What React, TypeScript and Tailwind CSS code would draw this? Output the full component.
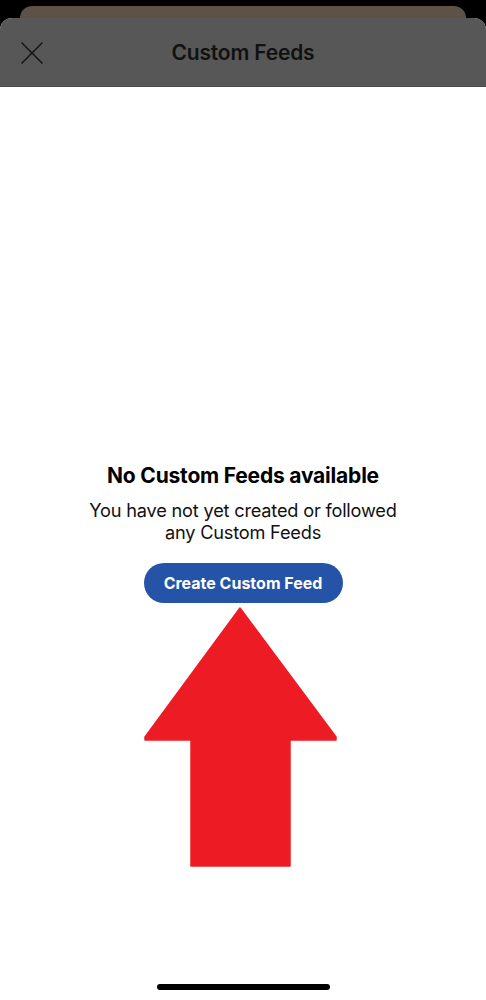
import React from "react";

export default function App() {
  return (
    <div
      className="w-[486px] h-[1000px] bg-black flex flex-col overflow-hidden"
      style={{ fontFamily: "Inter, 'Noto Sans', 'Liberation Sans', sans-serif" }}
    >
      <div className="h-[6px] shrink-0" />
      <div className="mx-[20px] h-[12px] shrink-0 rounded-t-[12px] bg-[#5e5246]" />
      <div className="flex-1 flex flex-col bg-white rounded-t-[12px] overflow-hidden">
        <div className="h-[69px] shrink-0 bg-[#575757] border-b border-[#4a4a4a] flex items-center relative">
          <div className="absolute left-[20px] top-[23px]">
            <svg width="24" height="24" viewBox="0 0 24 24">
              <path d="M2 2 L22 22 M22 2 L2 22" stroke="#161616" strokeWidth="1.6" fill="none" strokeLinecap="round" />
            </svg>
          </div>
          <div className="w-full text-center text-[21px] font-semibold text-[#111111] tracking-[-0.2px] pt-[2px]">
            Custom Feeds
          </div>
        </div>
        <div className="flex flex-col items-center pt-[375px]">
          <div className="text-[21px] leading-[28px] font-bold text-black tracking-[-0.2px]">
            No Custom Feeds available
          </div>
          <div className="mt-[9px] text-[18.2px] leading-[22px] text-[#111111] text-center tracking-[-0.2px]">
            You have not yet created or followed
            <br />
            any Custom Feeds
          </div>
          <button className="mt-[20px] h-[40px] w-[199px] rounded-full bg-[#2453a8] text-white text-[16px] font-bold tracking-[0px]">
            Create Custom Feed
          </button>
        </div>
        <svg width="486" height="262" viewBox="0 606 486 262" className="mt-[2px] shrink-0">
          <path
            d="M240 609 L336 738 L336 741 L290 741 L290 867 L191 867 L191 741 L145 741 L145 738 Z"
            fill="#ed1c24"
            stroke="#ed1c24"
            strokeWidth="1.5"
            strokeLinejoin="round"
          />
        </svg>
        <div className="flex-1" />
        <div className="flex justify-center pb-[10px]">
          <div className="w-[173px] h-[6px] rounded-full bg-black ml-[1px]" />
        </div>
      </div>
    </div>
  );
}
